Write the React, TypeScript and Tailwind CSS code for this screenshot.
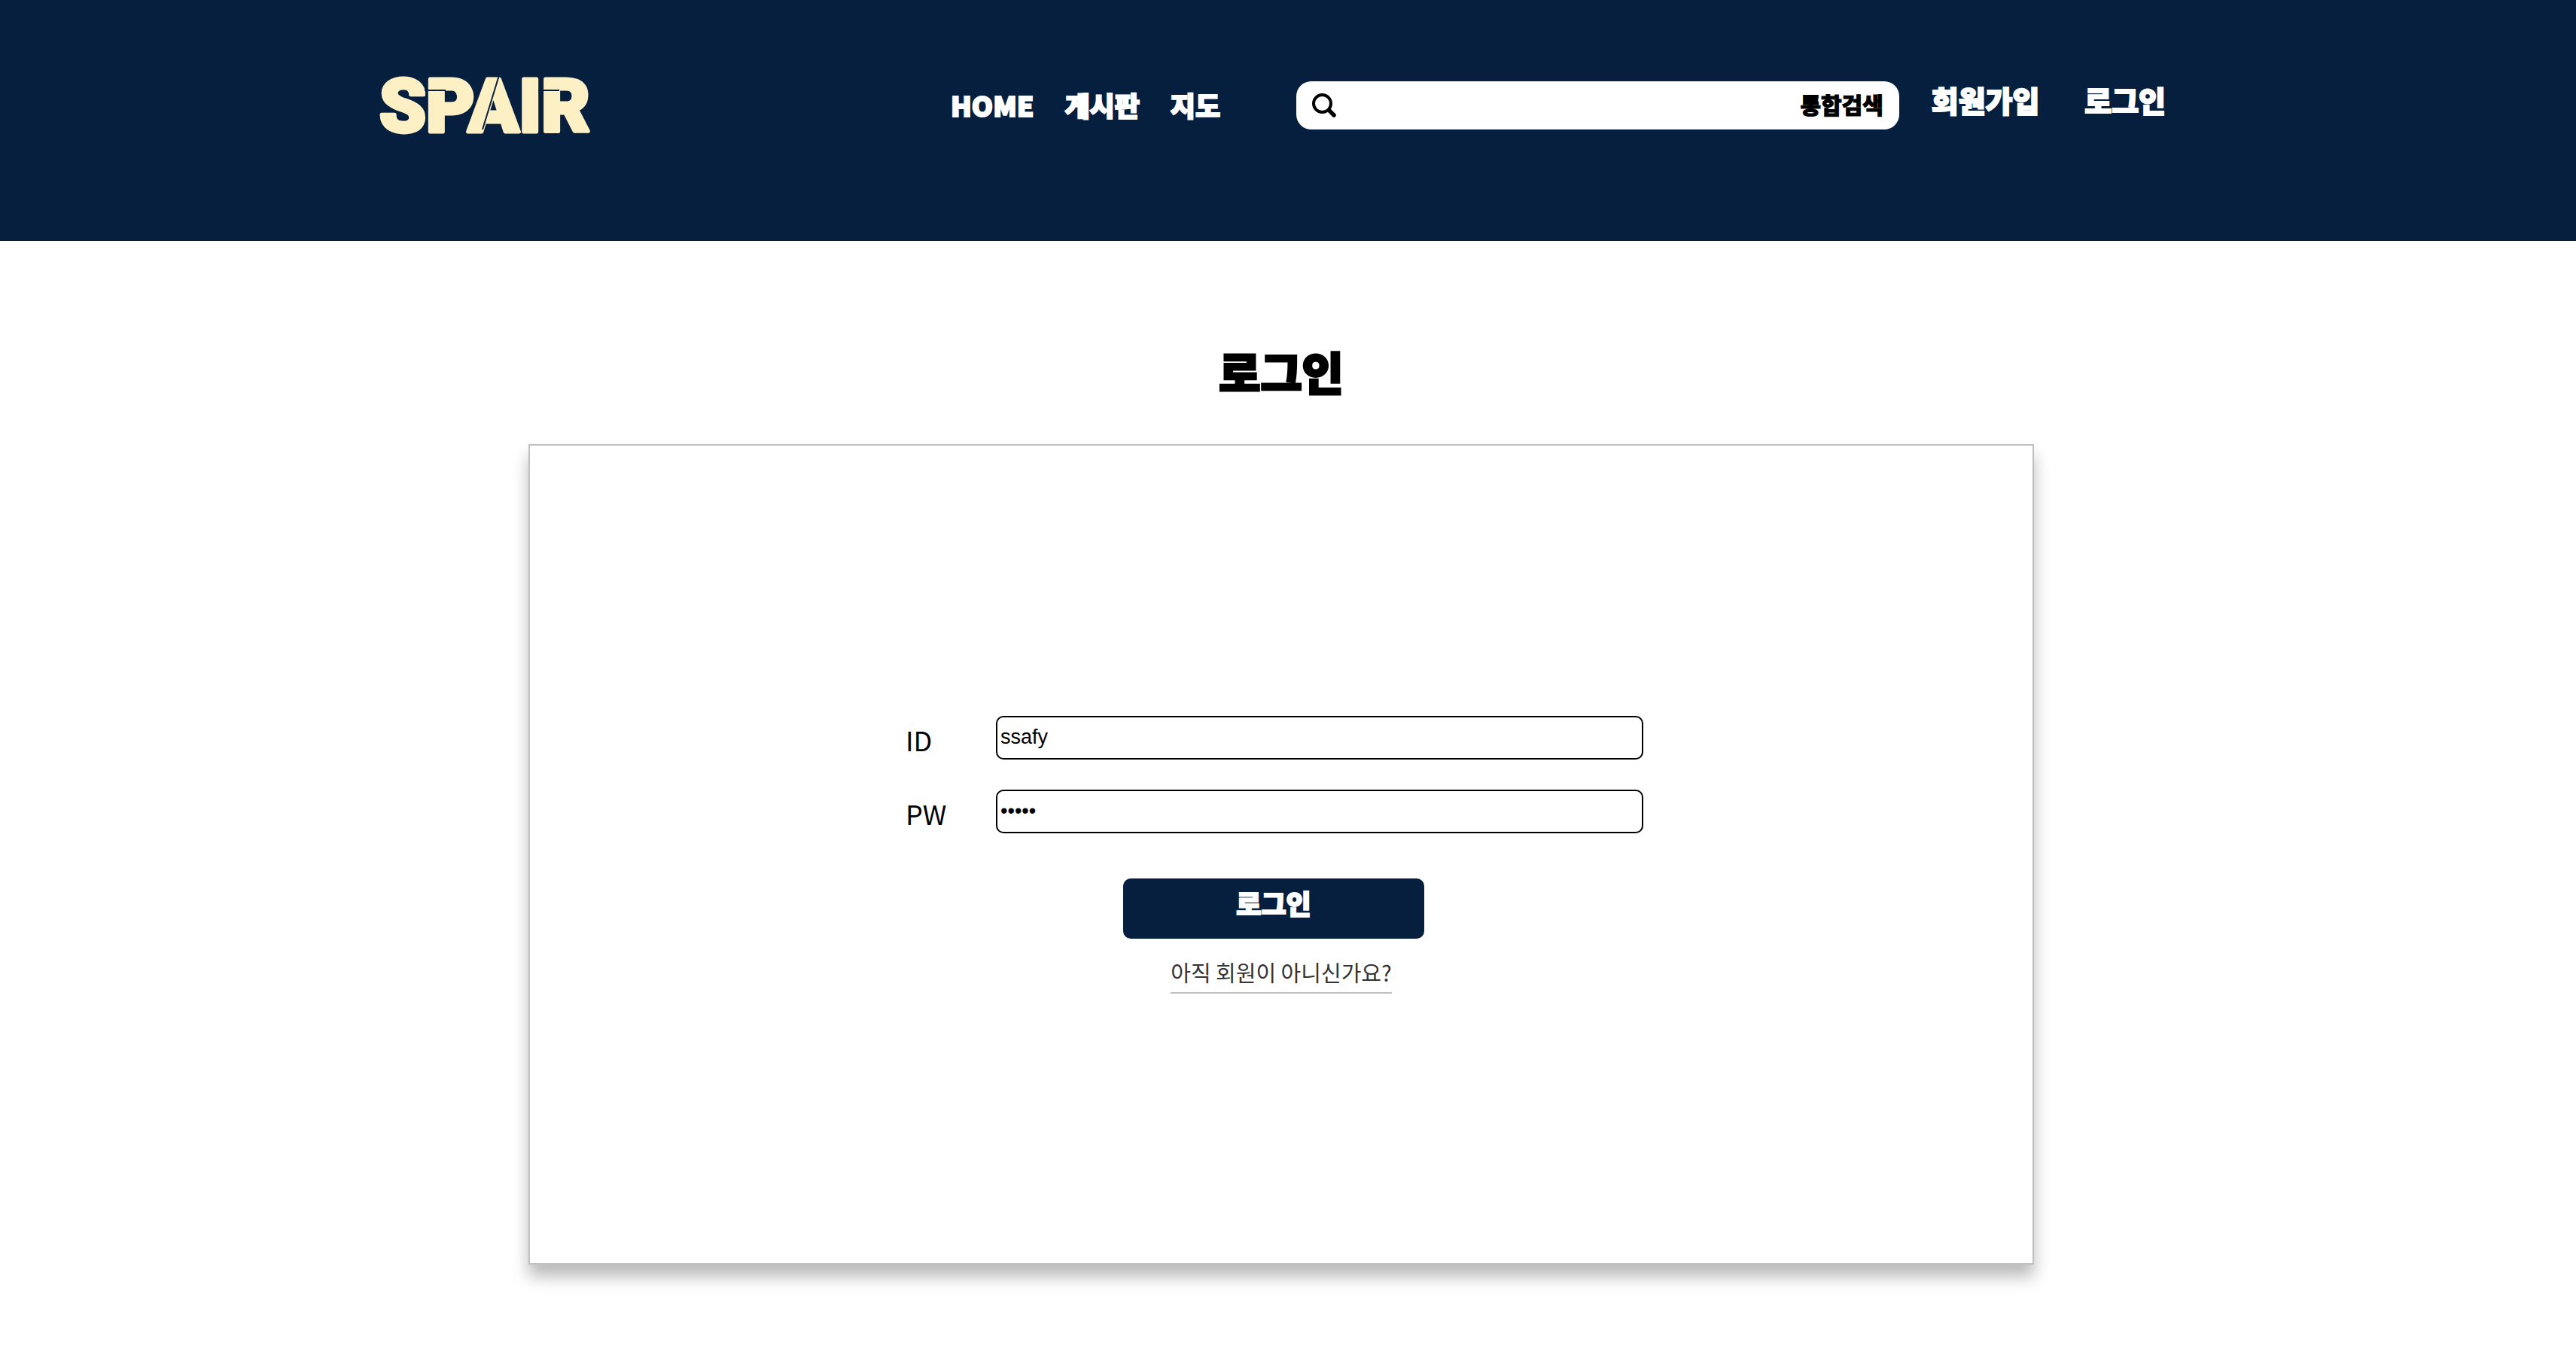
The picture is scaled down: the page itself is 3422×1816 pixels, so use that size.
import { useState } from "react";

function Logo() {
  return (
    <a href="#home" aria-label="SPAIR" className="block">
      <svg viewBox="0 0 290 100" className="block h-[100px] w-[290px] overflow-visible">
        <text
          x="2"
          y="85"
          strokeLinejoin="round"
          className="fill-[#fdf0c4] stroke-[#fdf0c4] stroke-[5px] text-[99px] font-black [font-family:'Roboto',sans-serif]"
        >
          SPAIR
        </text>
        <g stroke="#061f3e" strokeWidth="2" fill="none">
          <path d="M62 30 H90" />
          <path d="M161 10 L139 82" />
          <path d="M213 30 H241" />
        </g>
      </svg>
    </a>
  );
}

function SearchIcon() {
  return (
    <svg viewBox="0 0 32 32" className="size-8 shrink-0" fill="none" stroke="black" strokeLinecap="round">
      <circle cx="13.5" cy="13.5" r="11.5" strokeWidth="4" />
      <path d="M22.5 22.5 L29 29" strokeWidth="5.5" />
    </svg>
  );
}

function Header() {
  return (
    <header className="h-80 bg-[#061f3e] pr-[18px] text-white">
      <div className="mx-auto flex w-full max-w-[2400px] items-start font-black leading-[48px]">
        <div className="w-[760px] shrink-0 pt-[90px]">
          <Logo />
        </div>
        <nav className="flex w-[460px] shrink-0 gap-[41px] pt-[115px] pl-px text-[36px] whitespace-nowrap [-webkit-text-stroke:2px_white]">
          <a href="#home">HOME</a>
          <a href="#board">게시판</a>
          <a href="#map">지도</a>
        </nav>
        <form
          role="search"
          className="mt-[108px] flex h-16 min-w-0 flex-1 items-center rounded-[20px] bg-white px-[21px] text-black"
          onSubmit={(e) => e.preventDefault()}
        >
          <SearchIcon />
          <input aria-label="통합검색" className="h-full min-w-0 flex-1 bg-transparent px-4 text-[26px] font-normal outline-none" />
          <button type="submit" className="pb-1 text-[30px] leading-[40px] [-webkit-text-stroke:1px_black]">
            통합검색
          </button>
        </form>
        <div className="flex gap-[60px] pt-[108px] pr-[25px] pl-[43px] text-[39px] whitespace-nowrap [-webkit-text-stroke:2px_white]">
          <a href="#signup">회원가입</a>
          <a href="#login">로그인</a>
        </div>
      </div>
    </header>
  );
}

const inputClass =
  "h-[58px] min-w-0 flex-1 rounded-[10px] border-2 border-black bg-white px-1 text-[27px] text-black outline-none [font-family:'Liberation_Sans',Arial,sans-serif]";

function LoginForm() {
  const [id, setId] = useState("ssafy");
  const [pw, setPw] = useState("ssafy");
  return (
    <form className="flex w-full flex-col items-center" onSubmit={(e) => e.preventDefault()}>
      <div className="mr-[18px] flex w-full max-w-[980px] flex-col gap-10">
        <div className="flex">
          <label htmlFor="user-id" className="w-[120px] pt-1.5 text-[36px] leading-[50px]">
            ID
          </label>
          <input id="user-id" className={inputClass} value={id} onChange={(e) => setId(e.target.value)} />
        </div>
        <div className="flex">
          <label htmlFor="user-pw" className="w-[120px] pt-1.5 text-[36px] leading-[50px]">
            PW
          </label>
          <input
            id="user-pw"
            type="password"
            className={inputClass}
            value={pw}
            onChange={(e) => setPw(e.target.value)}
          />
        </div>
      </div>
      <button
        type="submit"
        className="mt-[60px] mr-5 h-20 w-[400px] rounded-[10px] bg-[#061f3e] pb-4 text-[36px] leading-[48px] font-black text-white [-webkit-text-stroke:2px_white]"
      >
        로그인
      </button>
      <a
        href="#signup"
        className="mt-[23px] border-b-2 border-[#c0c0c0] pb-1.5 text-[29px] leading-[42px] text-[#333333]"
      >
        아직 회원이 아니신가요?
      </a>
    </form>
  );
}

export default function App() {
  return (
    <div className="min-h-screen bg-white text-black [font-family:'Noto_Sans_CJK_KR',sans-serif]">
      <Header />
      <main className="pr-[18px] pb-[136px]">
        <h1 className="pt-[128px] text-center text-[60px] leading-[90px] font-black [-webkit-text-stroke:3px_black]">
          로그인
        </h1>
        <section className="mx-auto mt-[52px] flex min-h-[1090px] w-full max-w-[2000px] items-center border-2 border-[#c0c0c0] bg-white shadow-[0_16px_20px_rgba(0,0,0,0.27)]">
          <LoginForm />
        </section>
      </main>
    </div>
  );
}
